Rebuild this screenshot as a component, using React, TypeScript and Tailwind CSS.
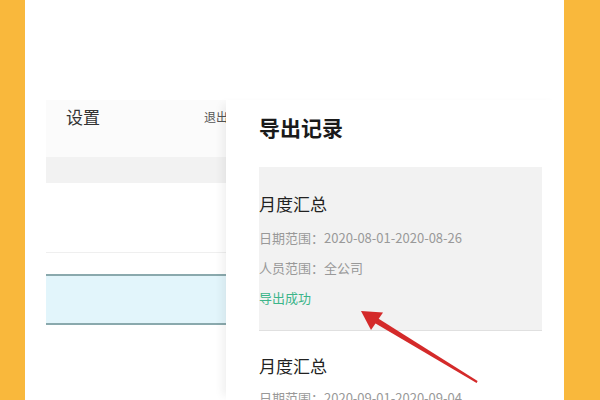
import React from 'react';

const font = { fontFamily: '"Noto Sans CJK SC", "Noto Sans", sans-serif' };

const Record = ({ title, date, people, status }: { title: string; date: string; people?: string; status?: string }) => (
    <div>
        <div className="text-[17px] leading-[22px] text-[#222]">{title}</div>
        <div className="mt-[8px] text-[13px] leading-[30px] text-[#999]">日期范围：{date}</div>
        {people && <div className="text-[13px] leading-[30px] text-[#999]">人员范围：{people}</div>}
        {status && <div className="text-[13px] leading-[30px] text-[#3cb58a]">{status}</div>}
    </div>
);

export default function App() {
    return (
        <div className="relative flex w-[600px] h-[400px] overflow-hidden bg-white" style={font}>
            <div className="w-[25px] bg-[#f9b83c]" />
            <div className="flex flex-1 pt-[100px]">
                {/* settings panel underneath */}
                <div className="ml-[21px] w-[180px] flex flex-col">
                    <div className="h-[57px] bg-[#fbfbfb] flex items-start pt-[6px] pl-[20px] relative">
                        <span className="text-[17px] leading-[22px] text-[#333]">设置</span>
                        <span className="absolute left-[158px] top-[8px] text-[12px] text-[#555] whitespace-nowrap">退出</span>
                    </div>
                    <div className="h-[26px] bg-[#f2f2f2]" />
                    <div className="h-[69px]" />
                    <div className="h-px bg-[#efefef]" />
                    <div className="h-[21px]" />
                    <div className="h-[51px] bg-[#e2f5fb] border-y-2 border-[#8aa9ad]" />
                </div>
                {/* export drawer */}
                <div className="relative z-10 w-[338px] bg-white shadow-[-8px_0_8px_-4px_rgba(0,0,0,0.06)] pt-[13px] pl-[33px] pr-[22px]">
                    <div className="text-[21px] leading-[28px] font-bold text-[#1a1a1a]">导出记录</div>
                    <div className="mt-[26px] bg-[#f2f2f2] border-b border-[#e0e0e0] pt-[26px] pb-[17px]">
                        <Record title="月度汇总" date="2020-08-01-2020-08-26" people="全公司" status="导出成功" />
                    </div>
                    <div className="mt-[24px]">
                        <div className="text-[17px] leading-[22px] text-[#222]">月度汇总</div>
                        <div className="mt-[6px] text-[13px] leading-[30px] text-[#999]">日期范围：2020-09-01-2020-09-04</div>
                    </div>
                </div>
            </div>
            <div className="w-[36px] bg-[#f9b83c]" />
            <svg className="absolute left-0 top-0 z-20 pointer-events-none" width="600" height="400">
                <polygon points="373.5,315.6 370.5,320.4 476.6,382.9 477.6,381.1" fill="#d42a2a" />
                <polygon points="361,311 383,312.5 371,330" fill="#d42a2a" />
            </svg>
        </div>
    );
}
